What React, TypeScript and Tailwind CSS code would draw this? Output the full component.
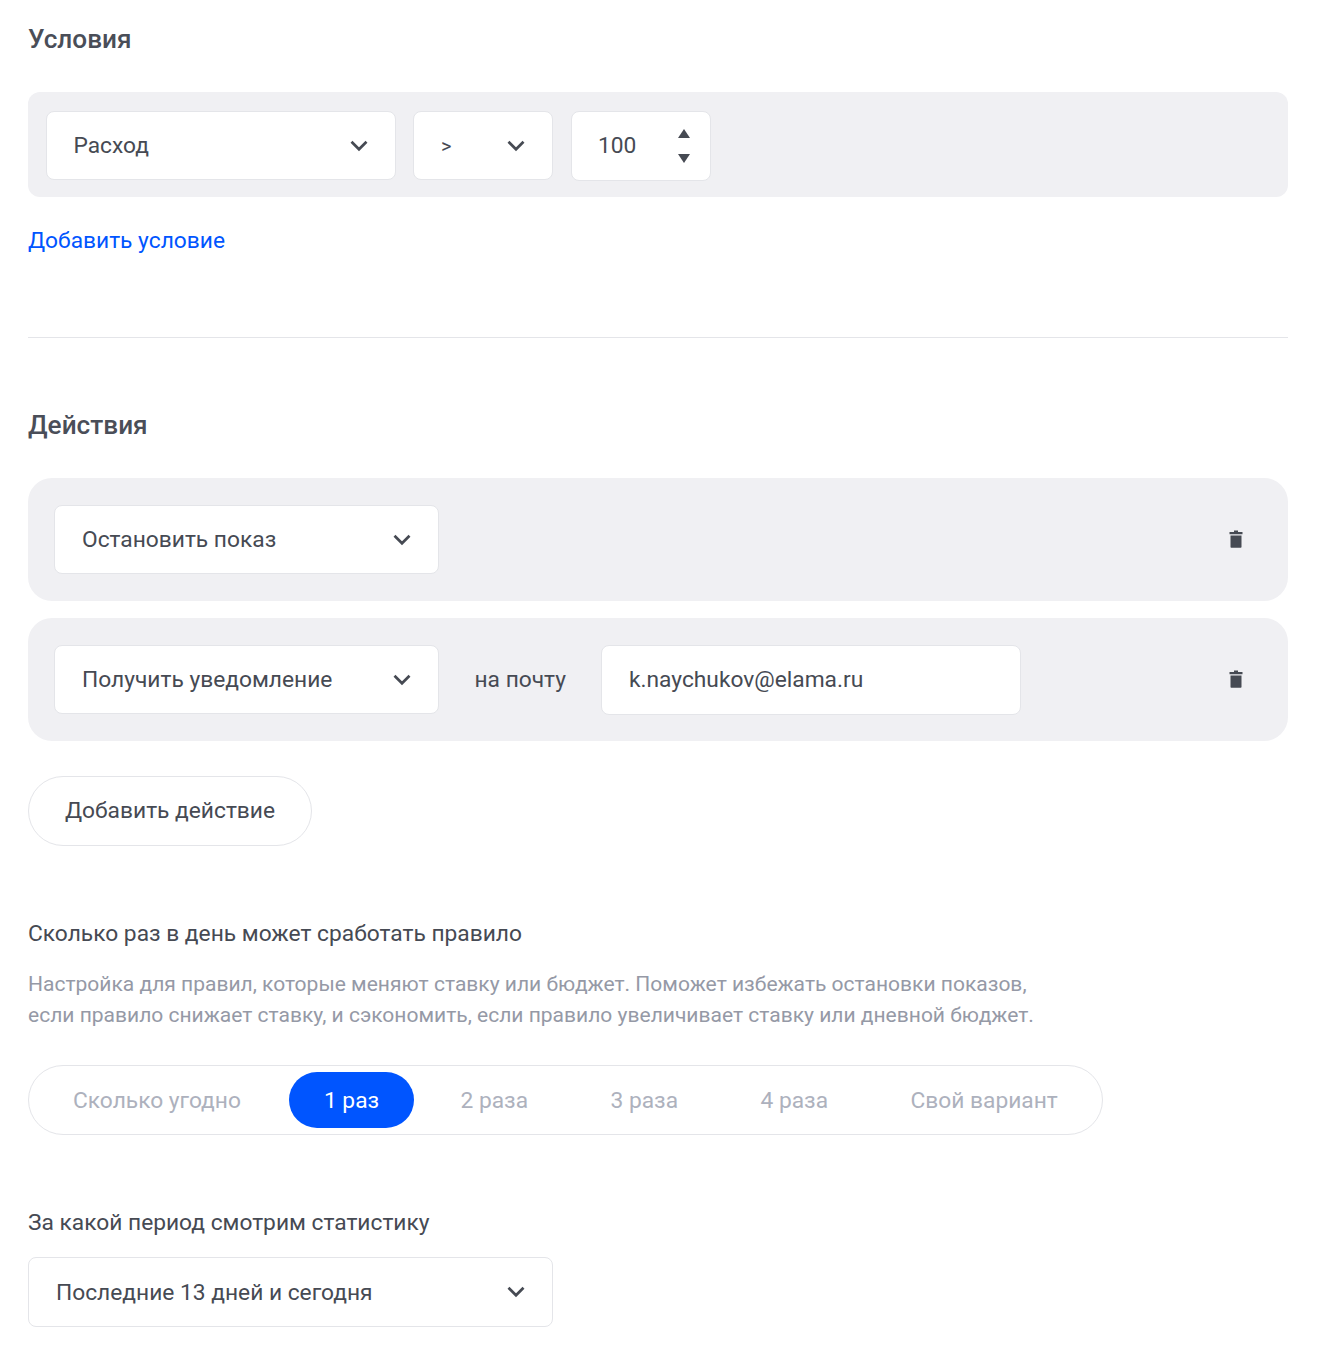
function Chevron() {
  return (
    <svg width="20" height="14" viewBox="0 0 20 14" fill="none" className="shrink-0">
      <path d="M2.5 2.8 10 10.3 17.5 2.8" stroke="#464a53" strokeWidth="2.7" />
    </svg>
  );
}

function Trash() {
  return (
    <svg width="14" height="18" viewBox="0 0 14 18" fill="#464a53">
      <path d="M5 0.5h4v1.5h4.5v2.3H0.5V2H5z" />
      <path d="M1.5 5.5h11V17a0.8 0.8 0 0 1-.8.8H2.3a0.8 0.8 0 0 1-.8-.8z" />
    </svg>
  );
}

function Select({ label, className, textClass }: { label: string; className: string; textClass?: string }) {
  return (
    <div className={`flex shrink-0 items-center justify-between rounded-lg border border-[#e4e5e9] bg-white ${className}`}>
      <span className={textClass ?? 'pt-[2px] text-[22.75px] text-[#464a53]'}>{label}</span>
      <Chevron />
    </div>
  );
}

const options = [
  { label: 'Сколько угодно', cls: 'ml-[44px] w-[216px]' },
  { label: '2 раза', cls: 'ml-[46.5px] w-[103.5px]' },
  { label: '3 раза', cls: 'ml-[46.5px] w-[103.5px]' },
  { label: '4 раза', cls: 'ml-[46.5px] w-[103.5px]' },
  { label: 'Свой вариант', cls: 'ml-[46.5px]' },
];

export default function App() {
  return (
    <div className="min-h-[1356px] bg-white pl-[28px] pr-[31px] font-['Roboto',sans-serif] text-[#464a53]">
      <h2 className="pt-[23px] text-[26.2px] font-medium leading-[33px] text-[#4a4e58]">Условия</h2>

      <div className="mt-[36px] flex h-[105px] rounded-xl bg-[#f0f0f3] pl-[18px] pt-[19px]">
        <Select label="Расход" className="h-[69px] w-[350px] pl-[26.5px] pr-[26px]" />
        <Select label=">" className="ml-[17px] h-[69px] w-[140px] pl-[27px] pr-[26px]" textClass="text-[20px] text-[#464a53]" />
        <div className="ml-[18px] flex h-[70px] w-[140px] items-center justify-between rounded-lg border border-[#e4e5e9] bg-white pl-[26px] pr-[20px]">
          <span className="pt-[1px] text-[22.75px]">100</span>
          <div className="flex flex-col gap-[16px]">
            <svg width="12" height="9" viewBox="0 0 12 9" fill="#464a53"><path d="M6 0 12 9H0z" /></svg>
            <svg width="12" height="9" viewBox="0 0 12 9" fill="#464a53"><path d="M6 9 0 0h12z" /></svg>
          </div>
        </div>
      </div>

      <a className="mt-[28px] block text-[22.75px] leading-[32px] text-[#0055ff]">Добавить условие</a>

      <div className="mt-[80px] h-px bg-[#e4e5e9]" />

      <h2 className="mt-[71px] text-[26.2px] font-medium leading-[33px] text-[#4a4e58]">Действия</h2>

      <div className="mt-[36px] flex h-[123px] items-center justify-between rounded-3xl bg-[#f0f0f3] pl-[26px] pr-[45px]">
        <Select label="Остановить показ" className="h-[69px] w-[385px] pl-[27px] pr-[26px]" />
        <div className="-mt-[2px]"><Trash /></div>
      </div>

      <div className="mt-[17px] flex h-[123px] items-center rounded-3xl bg-[#f0f0f3] pl-[26px] pr-[45px]">
        <Select label="Получить уведомление" className="h-[69px] w-[385px] pl-[27px] pr-[26px]" />
        <span className="ml-[35.5px] w-[91px] whitespace-nowrap pt-[2px] text-[22.75px]">на почту</span>
        <div className="ml-[35.5px] flex h-[70px] w-[420px] items-center rounded-lg border border-[#e4e5e9] bg-white pl-[27px] pt-[1px] text-[22.75px]">
          k.naychukov@elama.ru
        </div>
        <div className="-mt-[2px] ml-auto"><Trash /></div>
      </div>

      <button className="mt-[35px] block h-[70px] w-[284px] rounded-full border border-[#e4e5e9] bg-white text-[22.75px]">
        Добавить действие
      </button>

      <p className="mt-[72px] text-[22.75px] leading-[32px]">Сколько раз в день может сработать правило</p>
      <p className="mt-[18px] text-[21.02px] leading-[31px] text-[#9599a6]">
        Настройка для правил, которые меняют ставку или бюджет. Поможет избежать остановки показов,
        <br />
        если правило снижает ставку, и сэкономить, если правило увеличивает ставку или дневной бюджет.
      </p>

      <div className="mt-[35px] flex h-[70px] w-[1075px] items-center rounded-full border border-[#e4e5e9] pt-[2px] text-[22.75px] text-[#adb1bd]">
        <span className={options[0].cls}>{options[0].label}</span>
        <span className="-mt-[2px] flex h-[56px] w-[125px] items-center justify-center rounded-full bg-[#0055ff] pt-[2px] text-white">1 раз</span>
        {options.slice(1).map((o) => (
          <span key={o.label} className={o.cls}>{o.label}</span>
        ))}
      </div>

      <p className="mt-[72px] text-[22.75px] leading-[32px]">За какой период смотрим статистику</p>
      <Select label="Последние 13 дней и сегодня" className="mt-[18px] h-[70px] w-[525px] pl-[27px] pr-[26px]" />
    </div>
  );
}
